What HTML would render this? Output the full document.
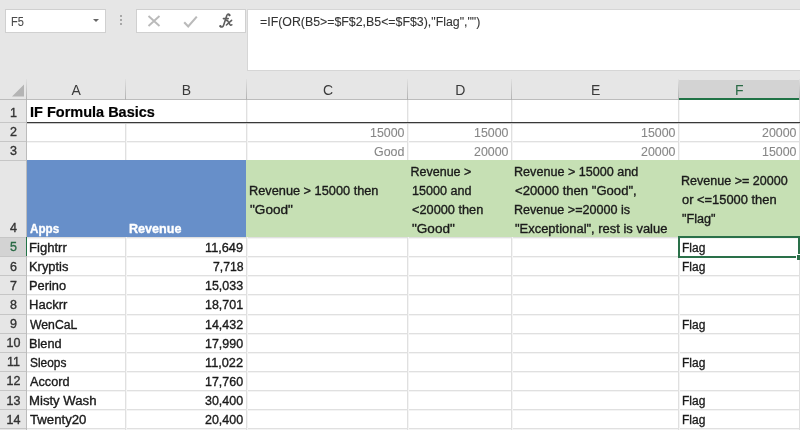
<!DOCTYPE html>
<html><head><meta charset="utf-8">
<style>
html,body{margin:0;padding:0;background:#e6e6e6;}
body{filter:grayscale(0);width:800px;height:430px;overflow:hidden;position:relative;background:#e6e6e6;font-family:"Liberation Sans",sans-serif;}
.t{position:absolute;white-space:pre;line-height:1;transform-origin:0 0;-webkit-text-stroke:0.35px currentColor;}
.a{position:absolute;}
</style></head><body>
<div class="a" style="left:5px;top:9px;width:99px;height:22px;background:#fff;border:1px solid #d0d0d0;"></div>
<div class="a" style="left:93px;top:18.5px;width:0;height:0;border-left:3px solid transparent;border-right:3px solid transparent;border-top:3.5px solid #666;"></div>
<div class="a" style="left:120px;top:15px;width:2px;height:2px;background:#a8a8a8;"></div>
<div class="a" style="left:120px;top:19px;width:2px;height:2px;background:#a8a8a8;"></div>
<div class="a" style="left:120px;top:23px;width:2px;height:2px;background:#a8a8a8;"></div>
<div class="a" style="left:136px;top:9px;width:108px;height:22px;background:#fff;border:1px solid #d0d0d0;"></div>
<svg class="a" style="left:147px;top:15px" width="14" height="12" viewBox="0 0 14 12"><path d="M1.5 1 L12.5 11 M12.5 1 L1.5 11" stroke="#bababa" stroke-width="1.9" fill="none"/></svg>
<svg class="a" style="left:183px;top:15px" width="15" height="13" viewBox="0 0 15 13"><path d="M1.2 7.2 L5.2 11.4 L13.8 1.6" stroke="#bababa" stroke-width="2.1" fill="none"/></svg>
<svg class="a" style="left:214px;top:8px" width="24" height="24" viewBox="0 0 24 24"><g fill="none" stroke="#5e5e5e" stroke-width="1.6" stroke-linecap="round"><path d="M15.6 7.4 C15.4 5.6 13.6 5.4 12.8 7.6 L9.6 17.2 C9 19 7.4 19.6 6.2 18.4"/><path d="M9.4 10.6 L14.2 10.6"/><path d="M12.2 12.4 C13.4 12 13.8 12.6 14.4 13.8 L15.8 16.4 C16.3 17.2 16.9 17.4 17.8 16.8"/><path d="M17.6 12.4 L12.4 17"/></g><circle cx="15.4" cy="7.2" r="1.1" fill="#5a5a5a"/><circle cx="6.4" cy="18" r="1.1" fill="#5a5a5a"/></svg>
<div class="a" style="left:247px;top:9px;width:560px;height:60px;background:#fff;border:1px solid #d6d6d6;"></div>
<div class="a" style="left:0;top:80px;width:800px;height:20px;background:#e6e6e6;"></div>
<div class="a" style="left:679px;top:80px;width:121px;height:20px;background:#d3d3d3;"></div>
<div class="a" style="left:678px;top:98px;width:122px;height:2px;background:#217346;"></div>
<div class="a" style="left:0;top:99px;width:678px;height:1px;background:#bcbcbc;"></div>
<svg class="a" style="left:0;top:80px" width="26" height="19"><path d="M12 16.5 L24 16.5 L24 4.5 Z" fill="#b4b4b4"/></svg>
<div class="a" style="left:26px;top:79px;width:1px;height:21px;background:linear-gradient(#e0e0e0,#b0b0b0);"></div>
<div class="a" style="left:125px;top:79px;width:1px;height:21px;background:linear-gradient(#e0e0e0,#b0b0b0);"></div>
<div class="a" style="left:246px;top:79px;width:1px;height:21px;background:linear-gradient(#e0e0e0,#b0b0b0);"></div>
<div class="a" style="left:407px;top:79px;width:1px;height:21px;background:linear-gradient(#e0e0e0,#b0b0b0);"></div>
<div class="a" style="left:511px;top:79px;width:1px;height:21px;background:linear-gradient(#e0e0e0,#b0b0b0);"></div>
<div class="a" style="left:678px;top:79px;width:1px;height:21px;background:linear-gradient(#e0e0e0,#b0b0b0);"></div>
<div class="a" style="left:799px;top:79px;width:1px;height:21px;background:linear-gradient(#e0e0e0,#b0b0b0);"></div>
<div class="a" style="left:0;top:100px;width:26px;height:330px;background:#e6e6e6;"></div>
<div class="a" style="left:0;top:237px;width:26px;height:19px;background:#d3d3d3;"></div>
<div class="a" style="left:26px;top:100px;width:1px;height:330px;background:#bcbcbc;"></div>
<div class="a" style="left:27px;top:100px;width:773px;height:330px;background:#fff;"></div>
<div class="a" style="left:27px;top:122px;width:773px;height:1px;background:#e0e0e0;"></div>
<div class="a" style="left:27px;top:123px;width:773px;height:1px;background:#f4f4f4;"></div>
<div class="a" style="left:27px;top:141px;width:773px;height:1px;background:#e0e0e0;"></div>
<div class="a" style="left:27px;top:142px;width:773px;height:1px;background:#f4f4f4;"></div>
<div class="a" style="left:27px;top:160px;width:773px;height:1px;background:#e0e0e0;"></div>
<div class="a" style="left:27px;top:161px;width:773px;height:1px;background:#f4f4f4;"></div>
<div class="a" style="left:27px;top:237px;width:773px;height:1px;background:#e0e0e0;"></div>
<div class="a" style="left:27px;top:238px;width:773px;height:1px;background:#f4f4f4;"></div>
<div class="a" style="left:27px;top:256px;width:773px;height:1px;background:#e0e0e0;"></div>
<div class="a" style="left:27px;top:257px;width:773px;height:1px;background:#f4f4f4;"></div>
<div class="a" style="left:27px;top:275px;width:773px;height:1px;background:#e0e0e0;"></div>
<div class="a" style="left:27px;top:276px;width:773px;height:1px;background:#f4f4f4;"></div>
<div class="a" style="left:27px;top:294px;width:773px;height:1px;background:#e0e0e0;"></div>
<div class="a" style="left:27px;top:295px;width:773px;height:1px;background:#f4f4f4;"></div>
<div class="a" style="left:27px;top:314px;width:773px;height:1px;background:#e0e0e0;"></div>
<div class="a" style="left:27px;top:315px;width:773px;height:1px;background:#f4f4f4;"></div>
<div class="a" style="left:27px;top:333px;width:773px;height:1px;background:#e0e0e0;"></div>
<div class="a" style="left:27px;top:334px;width:773px;height:1px;background:#f4f4f4;"></div>
<div class="a" style="left:27px;top:352px;width:773px;height:1px;background:#e0e0e0;"></div>
<div class="a" style="left:27px;top:353px;width:773px;height:1px;background:#f4f4f4;"></div>
<div class="a" style="left:27px;top:371px;width:773px;height:1px;background:#e0e0e0;"></div>
<div class="a" style="left:27px;top:372px;width:773px;height:1px;background:#f4f4f4;"></div>
<div class="a" style="left:27px;top:390px;width:773px;height:1px;background:#e0e0e0;"></div>
<div class="a" style="left:27px;top:391px;width:773px;height:1px;background:#f4f4f4;"></div>
<div class="a" style="left:27px;top:409px;width:773px;height:1px;background:#e0e0e0;"></div>
<div class="a" style="left:27px;top:410px;width:773px;height:1px;background:#f4f4f4;"></div>
<div class="a" style="left:27px;top:428px;width:773px;height:1px;background:#e0e0e0;"></div>
<div class="a" style="left:27px;top:429px;width:773px;height:1px;background:#f4f4f4;"></div>
<div class="a" style="left:125px;top:100px;width:1px;height:330px;background:#e0e0e0;"></div>
<div class="a" style="left:126px;top:100px;width:1px;height:330px;background:#f4f4f4;"></div>
<div class="a" style="left:246px;top:100px;width:1px;height:330px;background:#e0e0e0;"></div>
<div class="a" style="left:247px;top:100px;width:1px;height:330px;background:#f4f4f4;"></div>
<div class="a" style="left:407px;top:100px;width:1px;height:330px;background:#e0e0e0;"></div>
<div class="a" style="left:408px;top:100px;width:1px;height:330px;background:#f4f4f4;"></div>
<div class="a" style="left:511px;top:100px;width:1px;height:330px;background:#e0e0e0;"></div>
<div class="a" style="left:512px;top:100px;width:1px;height:330px;background:#f4f4f4;"></div>
<div class="a" style="left:678px;top:100px;width:1px;height:330px;background:#e0e0e0;"></div>
<div class="a" style="left:679px;top:100px;width:1px;height:330px;background:#f4f4f4;"></div>
<div class="a" style="left:799px;top:100px;width:1px;height:330px;background:#e0e0e0;"></div>
<div class="a" style="left:800px;top:100px;width:1px;height:330px;background:#f4f4f4;"></div>
<div class="a" style="left:0;top:122px;width:26px;height:1px;background:#c6c6c6;"></div>
<div class="a" style="left:0;top:141px;width:26px;height:1px;background:#c6c6c6;"></div>
<div class="a" style="left:0;top:160px;width:26px;height:1px;background:#c6c6c6;"></div>
<div class="a" style="left:0;top:237px;width:26px;height:1px;background:#c6c6c6;"></div>
<div class="a" style="left:0;top:256px;width:26px;height:1px;background:#c6c6c6;"></div>
<div class="a" style="left:0;top:275px;width:26px;height:1px;background:#c6c6c6;"></div>
<div class="a" style="left:0;top:294px;width:26px;height:1px;background:#c6c6c6;"></div>
<div class="a" style="left:0;top:314px;width:26px;height:1px;background:#c6c6c6;"></div>
<div class="a" style="left:0;top:333px;width:26px;height:1px;background:#c6c6c6;"></div>
<div class="a" style="left:0;top:352px;width:26px;height:1px;background:#c6c6c6;"></div>
<div class="a" style="left:0;top:371px;width:26px;height:1px;background:#c6c6c6;"></div>
<div class="a" style="left:0;top:390px;width:26px;height:1px;background:#c6c6c6;"></div>
<div class="a" style="left:0;top:409px;width:26px;height:1px;background:#c6c6c6;"></div>
<div class="a" style="left:0;top:428px;width:26px;height:1px;background:#c6c6c6;"></div>
<div class="a" style="left:26px;top:237px;width:1px;height:19px;background:#217346;"></div>
<div class="a" style="left:125px;top:100px;width:2px;height:22px;background:#fff;"></div>
<div class="a" style="left:27px;top:122px;width:773px;height:1px;background:#383838;"></div>
<div class="a" style="left:27px;top:123px;width:773px;height:1px;background:#c8c8c8;"></div>
<div class="a" style="left:27px;top:160px;width:219px;height:77px;background:#678fc9;"></div>
<div class="a" style="left:246px;top:160px;width:554px;height:77px;background:#c6e0b4;"></div>
<div class="t" style="left:10.52px;top:15.62px;font-size:12.5px;color:#4a4a4a;transform:scaleX(0.8801);-webkit-text-stroke:0.1px;">F5</div>
<div class="t" style="left:259.50px;top:15.72px;font-size:12.5px;color:#333;transform:scaleX(0.9879);-webkit-text-stroke:0.1px;">=IF(OR(B5&gt;=$F$2,B5&lt;=$F$3),"Flag","")</div>
<div class="t" style="left:71.45px;top:83.35px;font-size:14px;color:#3a3a3a;-webkit-text-stroke:0;">A</div>
<div class="t" style="left:181.70px;top:83.35px;font-size:14px;color:#3a3a3a;-webkit-text-stroke:0;">B</div>
<div class="t" style="left:322.95px;top:83.35px;font-size:14px;color:#3a3a3a;-webkit-text-stroke:0;">C</div>
<div class="t" style="left:455.20px;top:83.35px;font-size:14px;color:#3a3a3a;-webkit-text-stroke:0;">D</div>
<div class="t" style="left:590.95px;top:83.35px;font-size:14px;color:#3a3a3a;-webkit-text-stroke:0;">E</div>
<div class="t" style="left:734.95px;top:83.35px;font-size:14px;color:#2a6a45;-webkit-text-stroke:0;">F</div>
<div class="t" style="left:10.10px;top:107.22px;font-size:12.5px;color:#333;">1</div>
<div class="t" style="left:10.10px;top:126.22px;font-size:12.5px;color:#333;">2</div>
<div class="t" style="left:10.10px;top:145.22px;font-size:12.5px;color:#333;">3</div>
<div class="t" style="left:10.10px;top:222.22px;font-size:12.5px;color:#333;">4</div>
<div class="t" style="left:10.10px;top:241.37px;font-size:12.5px;color:#2a6a45;">5</div>
<div class="t" style="left:10.10px;top:260.52px;font-size:12.5px;color:#333;">6</div>
<div class="t" style="left:10.10px;top:279.67px;font-size:12.5px;color:#333;">7</div>
<div class="t" style="left:10.10px;top:298.82px;font-size:12.5px;color:#333;">8</div>
<div class="t" style="left:10.10px;top:317.97px;font-size:12.5px;color:#333;">9</div>
<div class="t" style="left:6.62px;top:337.12px;font-size:12.5px;color:#333;">10</div>
<div class="t" style="left:7.09px;top:356.27px;font-size:12.5px;color:#333;">11</div>
<div class="t" style="left:6.62px;top:375.42px;font-size:12.5px;color:#333;">12</div>
<div class="t" style="left:6.62px;top:394.57px;font-size:12.5px;color:#333;">13</div>
<div class="t" style="left:6.62px;top:413.72px;font-size:12.5px;color:#333;">14</div>
<div class="t" style="left:29.78px;top:104.00px;font-size:15px;color:#000;font-weight:bold;transform:scaleX(0.9667);-webkit-text-stroke:0.2px;">IF Formula Basics</div>
<div class="t" style="left:370.00px;top:127.12px;font-size:12.5px;color:#878787;transform:scaleX(0.9912);-webkit-text-stroke:0.1px;">15000</div>
<div class="t" style="left:474.10px;top:127.12px;font-size:12.5px;color:#878787;transform:scaleX(0.9912);-webkit-text-stroke:0.1px;">15000</div>
<div class="t" style="left:641.30px;top:127.12px;font-size:12.5px;color:#878787;transform:scaleX(0.9912);-webkit-text-stroke:0.1px;">15000</div>
<div class="t" style="left:761.80px;top:127.12px;font-size:12.5px;color:#878787;transform:scaleX(0.9912);-webkit-text-stroke:0.1px;">20000</div>
<div class="t" style="left:374.00px;top:145.72px;font-size:12.5px;color:#878787;transform:scaleX(0.9959);-webkit-text-stroke:0.1px;">Good</div>
<div class="t" style="left:474.10px;top:145.72px;font-size:12.5px;color:#878787;transform:scaleX(0.9912);-webkit-text-stroke:0.1px;">20000</div>
<div class="t" style="left:641.30px;top:145.72px;font-size:12.5px;color:#878787;transform:scaleX(0.9912);-webkit-text-stroke:0.1px;">20000</div>
<div class="t" style="left:761.80px;top:145.72px;font-size:12.5px;color:#878787;transform:scaleX(0.9912);-webkit-text-stroke:0.1px;">15000</div>
<div class="t" style="left:30.30px;top:222.72px;font-size:12.5px;color:#fff;font-weight:bold;transform:scaleX(0.9330);">Apps</div>
<div class="t" style="left:128.80px;top:222.72px;font-size:12.5px;color:#fff;font-weight:bold;transform:scaleX(1.0066);">Revenue</div>
<div class="t" style="left:248.88px;top:184.52px;font-size:12.5px;color:#1a1a1a;transform:scaleX(1.0207);">Revenue &gt; 15000 then</div>
<div class="t" style="left:249.90px;top:203.52px;font-size:12.5px;color:#1a1a1a;transform:scaleX(1.0867);">"Good"</div>
<div class="t" style="left:410.50px;top:165.52px;font-size:12.5px;color:#1a1a1a;">Revenue &gt;</div>
<div class="t" style="left:411.50px;top:184.62px;font-size:12.5px;color:#1a1a1a;transform:scaleX(1.0062);">15000 and</div>
<div class="t" style="left:411.50px;top:203.72px;font-size:12.5px;color:#1a1a1a;transform:scaleX(1.0199);">&lt;20000 then</div>
<div class="t" style="left:411.50px;top:222.82px;font-size:12.5px;color:#1a1a1a;transform:scaleX(1.0842);">"Good"</div>
<div class="t" style="left:514.39px;top:165.52px;font-size:12.5px;color:#1a1a1a;transform:scaleX(1.0072);">Revenue &gt; 15000 and</div>
<div class="t" style="left:515.40px;top:184.62px;font-size:12.5px;color:#1a1a1a;transform:scaleX(1.0468);">&lt;20000 then "Good",</div>
<div class="t" style="left:514.39px;top:203.72px;font-size:12.5px;color:#1a1a1a;transform:scaleX(1.0060);">Revenue &gt;=20000 is</div>
<div class="t" style="left:515.40px;top:222.82px;font-size:12.5px;color:#1a1a1a;transform:scaleX(1.0354);">"Exceptional", rest is value</div>
<div class="t" style="left:681.40px;top:174.92px;font-size:12.5px;color:#1a1a1a;transform:scaleX(1.0029);">Revenue &gt;= 20000</div>
<div class="t" style="left:682.40px;top:194.12px;font-size:12.5px;color:#1a1a1a;transform:scaleX(1.0305);">or &lt;=15000 then</div>
<div class="t" style="left:682.40px;top:213.32px;font-size:12.5px;color:#1a1a1a;transform:scaleX(1.0106);">"Flag"</div>
<div class="t" style="left:29.35px;top:241.92px;font-size:12.5px;color:#1a1a1a;transform:scaleX(1.0472);">Fightrr</div>
<div class="t" style="left:205.20px;top:241.92px;font-size:12.5px;color:#1a1a1a;transform:scaleX(1.0200);">11,649</div>
<div class="t" style="left:681.54px;top:241.92px;font-size:12.5px;color:#1a1a1a;transform:scaleX(0.9587);">Flag</div>
<div class="t" style="left:29.37px;top:261.07px;font-size:12.5px;color:#1a1a1a;transform:scaleX(1.0311);">Kryptis</div>
<div class="t" style="left:212.60px;top:261.07px;font-size:12.5px;color:#1a1a1a;transform:scaleX(0.9799);">7,718</div>
<div class="t" style="left:681.54px;top:261.07px;font-size:12.5px;color:#1a1a1a;transform:scaleX(0.9587);">Flag</div>
<div class="t" style="left:29.37px;top:280.22px;font-size:12.5px;color:#1a1a1a;transform:scaleX(1.0261);">Perino</div>
<div class="t" style="left:205.20px;top:280.22px;font-size:12.5px;color:#1a1a1a;transform:scaleX(0.9953);">15,033</div>
<div class="t" style="left:29.36px;top:299.37px;font-size:12.5px;color:#1a1a1a;transform:scaleX(1.0409);">Hackrr</div>
<div class="t" style="left:205.20px;top:299.37px;font-size:12.5px;color:#1a1a1a;transform:scaleX(0.9953);">18,701</div>
<div class="t" style="left:30.40px;top:318.52px;font-size:12.5px;color:#1a1a1a;transform:scaleX(0.9782);">WenCaL</div>
<div class="t" style="left:205.20px;top:318.52px;font-size:12.5px;color:#1a1a1a;transform:scaleX(0.9953);">14,432</div>
<div class="t" style="left:681.54px;top:318.52px;font-size:12.5px;color:#1a1a1a;transform:scaleX(0.9587);">Flag</div>
<div class="t" style="left:29.38px;top:337.67px;font-size:12.5px;color:#1a1a1a;transform:scaleX(1.0188);">Blend</div>
<div class="t" style="left:205.20px;top:337.67px;font-size:12.5px;color:#1a1a1a;transform:scaleX(0.9953);">17,990</div>
<div class="t" style="left:30.40px;top:356.82px;font-size:12.5px;color:#1a1a1a;transform:scaleX(0.9507);">Sleops</div>
<div class="t" style="left:205.20px;top:356.82px;font-size:12.5px;color:#1a1a1a;transform:scaleX(1.0200);">11,022</div>
<div class="t" style="left:681.54px;top:356.82px;font-size:12.5px;color:#1a1a1a;transform:scaleX(0.9587);">Flag</div>
<div class="t" style="left:30.40px;top:375.97px;font-size:12.5px;color:#1a1a1a;transform:scaleX(1.0166);">Accord</div>
<div class="t" style="left:205.20px;top:375.97px;font-size:12.5px;color:#1a1a1a;transform:scaleX(0.9953);">17,760</div>
<div class="t" style="left:29.35px;top:395.12px;font-size:12.5px;color:#1a1a1a;transform:scaleX(1.0527);">Misty Wash</div>
<div class="t" style="left:205.20px;top:395.12px;font-size:12.5px;color:#1a1a1a;transform:scaleX(0.9953);">30,400</div>
<div class="t" style="left:681.54px;top:395.12px;font-size:12.5px;color:#1a1a1a;transform:scaleX(0.9587);">Flag</div>
<div class="t" style="left:30.40px;top:414.27px;font-size:12.5px;color:#1a1a1a;transform:scaleX(1.0551);">Twenty20</div>
<div class="t" style="left:205.20px;top:414.27px;font-size:12.5px;color:#1a1a1a;transform:scaleX(0.9953);">20,400</div>
<div class="t" style="left:681.54px;top:414.27px;font-size:12.5px;color:#1a1a1a;transform:scaleX(0.9587);">Flag</div>
<div class="a" style="left:677.5px;top:236px;width:122.5px;height:22px;border:2px solid #2a7049;box-sizing:border-box;"></div>
<div class="a" style="left:796px;top:254px;width:5px;height:5px;background:#2a7049;border-left:1px solid #fff;border-top:1px solid #fff;"></div>
</body></html>
